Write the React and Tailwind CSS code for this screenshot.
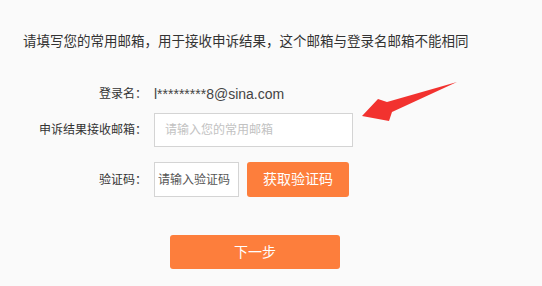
import React from 'react';

const FONT = { fontFamily: '"Liberation Sans", "Noto Sans CJK SC", sans-serif' };

function Arrow() {
    return (
        <svg className="absolute left-0 top-0 pointer-events-none" width="542" height="286">
            <polygon
                points="457,82 387,102 378,99 362,116 389,121 392,112"
                fill="#f2322f"
            />
        </svg>
    );
}

export default function App() {
    return (
        <div className="relative w-[542px] h-[286px] bg-[#fafafa] overflow-hidden" style={FONT}>
            <p className="pt-[33px] pl-[23px] h-[51px] text-[13.5px] leading-[18px] text-[#333]">
                请填写您的常用邮箱，用于接收申诉结果，这个邮箱与登录名邮箱不能相同
            </p>

            <div className="mt-[33px] flex items-center h-[20px]">
                <span className="w-[147px] text-right text-[12px] text-[#333]">登录名：</span>
                <span className="ml-[7px] text-[14px] text-[#444]">l*********8@sina.com</span>
            </div>

            <div className="mt-[9px] flex items-center">
                <span className="w-[147px] text-right text-[12px] text-[#333]">申诉结果接收邮箱：</span>
                <input
                    className="ml-[7px] w-[199px] h-[34px] border border-[#d4d4d4] bg-white px-[10px] text-[12px] outline-none placeholder:text-[#c2c2c2]"
                    placeholder="请输入您的常用邮箱"
                />
            </div>

            <div className="mt-[15px] flex items-center">
                <span className="w-[147px] text-right text-[12px] text-[#333]">验证码：</span>
                <input
                    className="ml-[7px] w-[85px] h-[35px] border border-[#d4d4d4] bg-white px-[3px] text-[12px] outline-none placeholder:text-[#555]"
                    placeholder="请输入验证码"
                />
                <button className="ml-[8px] w-[102px] h-[35px] rounded-[3px] bg-[#fd7e3c] text-white text-[14px]">
                    获取验证码
                </button>
            </div>

            <button className="mt-[38px] ml-[170px] block w-[170px] h-[34px] rounded-[3px] bg-[#fd7e3c] text-white text-[14px]">
                下一步
            </button>

            <Arrow />
        </div>
    );
}
